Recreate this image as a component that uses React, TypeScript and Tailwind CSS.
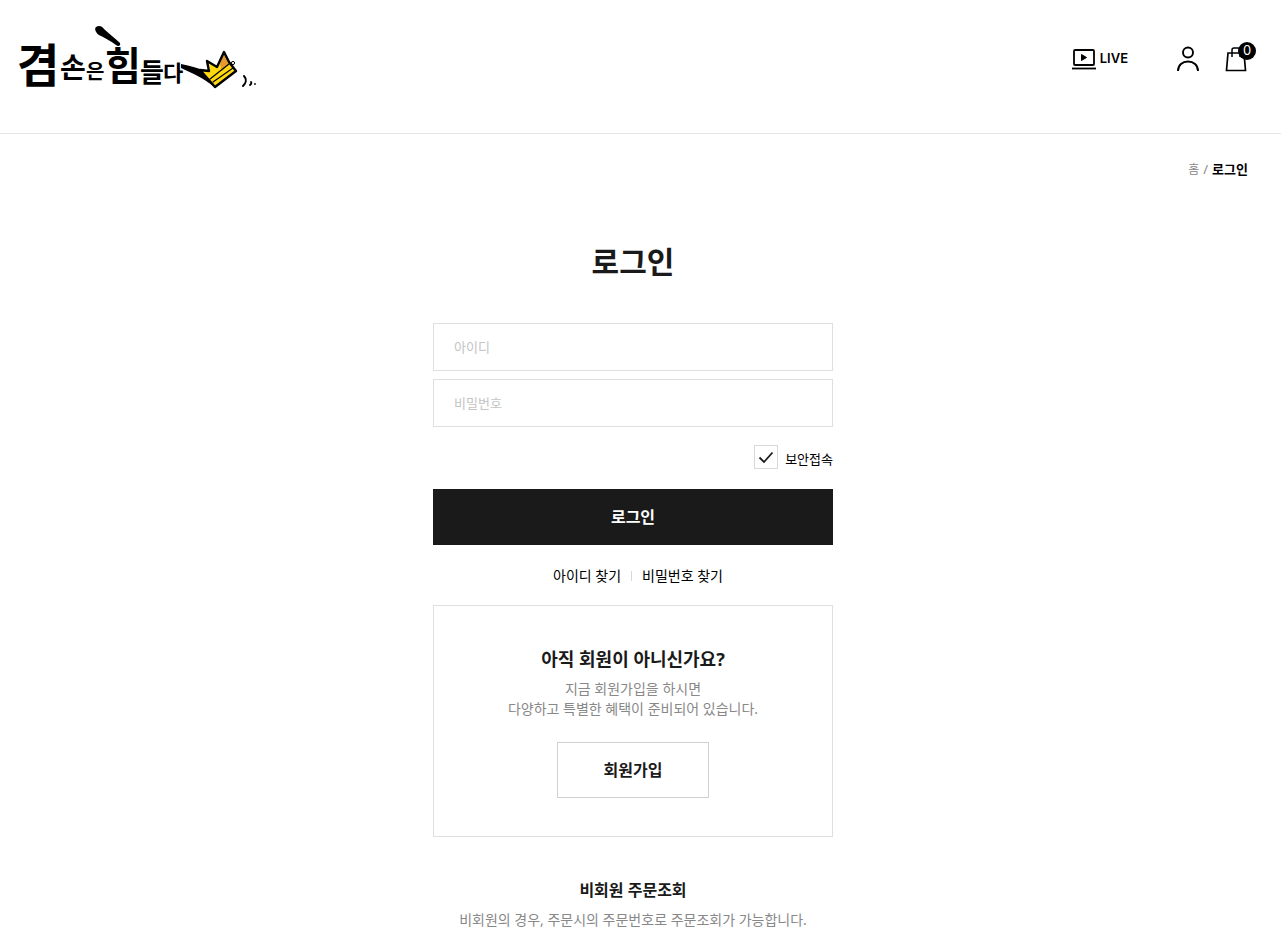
import { useState } from "react"

const Logo = () => (
  <svg width="244" height="92" viewBox="0 -12 244 92" role="img" aria-label="겸손은 힘들다" className="block">
    <g fill="#000" fontWeight="700">
      <text x="1" y="58" fontSize="46">겸</text>
      <text x="44" y="54" fontSize="28">손</text>
      <text x="70" y="55" fontSize="20">은</text>
      <text x="89" y="56" fontSize="39">힘</text>
      <text x="124" y="58" fontSize="26">들</text>
      <text x="147" y="57" fontSize="22">다</text>
    </g>
    {/* brush flick over the lettering */}
    <path d="M80 3c3-2 6-1 8 2 5 5 11 9 16 14 1 3-2 4-4 2-5-4-11-7-17-10-3-2-5-6-3-8z" fill="#000" />
    {/* brush stroke running into the crown */}
    <path d="M165 40c9 2 18 4 26 8l9 11c1 3-1 4-3 3-8-7-21-13-32-18z" fill="#000" />
    {/* crown */}
    <path d="M185 46l9 1-1-10 8 6 7-15 5 10 7 9-21 16z" fill="#ffd90f" />
    <path d="M204 40l4-11 5 10-7 8z" fill="#e69a2e" />
    <path d="M199 63l-15-17 9 1-2-10 10 6 7-15 5 10 7 9z" fill="none" stroke="#000" strokeWidth="2.4" strokeLinejoin="round" />
    <path d="M194 55l19-15M197 58l20-14" fill="none" stroke="#000" strokeWidth="1.2" strokeLinecap="round" />
    <circle cx="217" cy="39" r="1.6" fill="none" stroke="#000" />
    <path d="M228 52c3 3 2 7-1 10" fill="none" stroke="#000" strokeWidth="2" strokeLinecap="round" />
    <path d="M235 58c1 1 0 2-1 3M239 60v0" fill="none" stroke="#000" strokeWidth="1.8" strokeLinecap="round" />
  </svg>
)

const LiveIcon = () => (
  <svg width="24" height="22" viewBox="0 0 24 22" fill="none" stroke="#000" strokeWidth="1.8">
    <rect x="2" y="2" width="20" height="15" rx="1" />
    <path d="M0 20.500h24" />
    <path d="M9.500 6.500v6l5-3z" fill="#000" stroke="#000" strokeWidth="1" strokeLinejoin="round" />
  </svg>
)

const UserIcon = () => (
  <svg width="24" height="26" viewBox="0 0 24 26" fill="none" stroke="#000" strokeWidth="1.9">
    <circle cx="12" cy="6.500" r="5" />
    <path d="M2 25c0-6 4.500-9.500 10-9.500S22 19 22 25" />
  </svg>
)

const BagIcon = () => (
  <svg width="22" height="26" viewBox="0 0 22 26" fill="none" stroke="#000">
    <path d="M3 7h16l1.500 17.500H1.500z" strokeWidth="1.700" />
    <path d="M7 11V4q0-2 2-2h4q2 0 2 2v7" strokeWidth="1.500" />
  </svg>
)

const inputStyle =
  "block h-12 w-full border border-[#dfdfdf] px-5 text-[13px] text-black outline-none placeholder:text-[#c4c4c4]"

const App = () => {
  const [secure, setSecure] = useState(true)

  return (
    <div className="bg-white font-['Noto_Sans','Noto_Sans_CJK_KR',sans-serif] text-[#1a1a1a]">
      <header className="flex h-[134px] items-start justify-between border-b border-[#e5e5e5] pl-4 pr-[34px]">
        <a href="#" className="mt-3">
          <Logo />
        </a>
        <nav className="mt-[46px] flex h-[26px] items-center">
          <a href="#" className="flex items-center gap-1 font-['Inter',sans-serif] text-[13px] font-semibold text-black">
            <LiveIcon />
            LIVE
          </a>
          <a href="#" aria-label="마이페이지" className="ml-12">
            <UserIcon />
          </a>
          <a href="#" aria-label="장바구니" className="relative ml-[25px]">
            <BagIcon />
            <span className="absolute -top-1 left-[13px] flex size-[18px] items-center justify-center rounded-full bg-black font-['Inter',sans-serif] text-[13px] text-white">
              0
            </span>
          </a>
        </nav>
      </header>

      <div className="pr-[15px]">
        <ol className="flex items-baseline justify-end gap-1 pr-[18px] pt-[25px] text-[13px] leading-5">
          <li className="text-xs leading-5 text-[#888]">홈</li>
          <li className="text-[#888]">/</li>
          <li className="font-bold text-black">로그인</li>
        </ol>

        <main className="mx-auto w-full max-w-[400px]">
          <h1 className="mt-[60px] text-center text-[30px] leading-[44px] font-bold">로그인</h1>

          <form className="mt-[39px]" onSubmit={(e) => e.preventDefault()}>
            <div className="flex flex-col gap-2">
              <input type="text" aria-label="아이디" placeholder="아이디" className={inputStyle} />
              <input type="password" aria-label="비밀번호" placeholder="비밀번호" className={inputStyle} />
            </div>

            <div className="mt-[18px] flex h-6 justify-end gap-[7px]">
              <span className="relative size-6">
                <input
                  id="secure"
                  type="checkbox"
                  checked={secure}
                  onChange={(e) => setSecure(e.target.checked)}
                  className="block size-6 appearance-none border border-[#d9d9d9] bg-white"
                />
                {secure && (
                  <svg viewBox="0 0 24 24" fill="none" stroke="#1a1a1a" strokeWidth="1.8" className="pointer-events-none absolute inset-0 size-6">
                    <path d="M5.500 12.500l4.500 4.500 8.500-9.500" />
                  </svg>
                )}
              </span>
              <label htmlFor="secure" className="pt-1 text-[13px] leading-5 text-black">보안접속</label>
            </div>

            <button type="submit" className="mt-5 block h-14 w-full bg-[#1a1a1a] text-base font-bold text-white">
              로그인
            </button>
          </form>

          <div className="mt-[21px] flex items-center justify-center gap-[10px] pl-[10px] text-sm text-black">
            <a href="#">아이디 찾기</a>
            <span className="h-[10px] border-l border-[#d9d9d9]"></span>
            <a href="#">비밀번호 찾기</a>
          </div>

          <section className="mt-[19px] flex flex-col items-center border border-[#dfdfdf] pt-[39px] pb-[38px]">
            <h2 className="text-lg leading-7 font-bold">아직 회원이 아니신가요?</h2>
            <p className="mt-[6px] text-center text-sm text-[#888]">
              지금 회원가입을 하시면
              <br />
              다양하고 특별한 혜택이 준비되어 있습니다.
            </p>
            <button type="button" className="mt-[23px] h-14 w-[152px] border border-[#d0d0d0] text-base font-bold">
              회원가입
            </button>
          </section>

          <section className="pt-[41px] text-center">
            <h2 className="text-base font-bold">비회원 주문조회</h2>
            <p className="mt-2 text-sm text-[#888]">비회원의 경우, 주문시의 주문번호로 주문조회가 가능합니다.</p>
          </section>
        </main>
      </div>
    </div>
  )
}

export default App
